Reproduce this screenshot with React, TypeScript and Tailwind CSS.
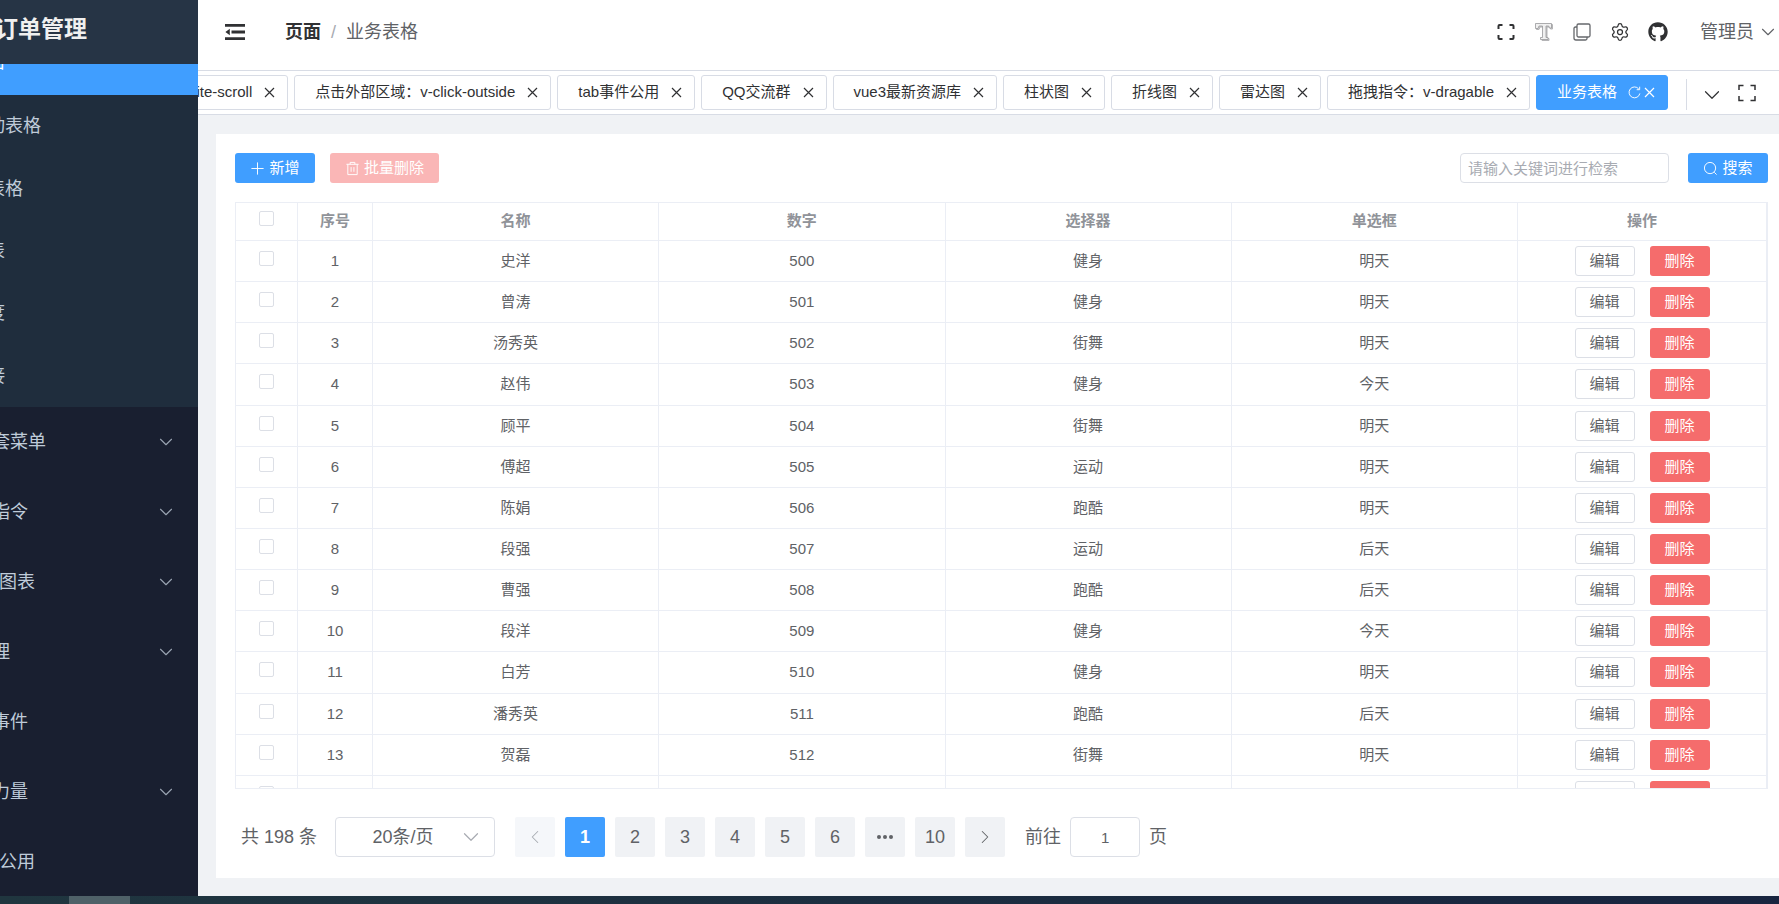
import { useState } from 'react';
import { ChevronDown, ChevronLeft, ChevronRight, Settings } from 'lucide-react';
import { FaGithub } from 'react-icons/fa';

const subMenu = ['分类联动表格', '树联动表格', '卡片列表', '列表宽度', '外部链接'];

const menu = [
  { title: '多级嵌套菜单', open: true },
  { title: '自定义指令', open: true },
  { title: 'Echarts图表', open: true },
  { title: '权限管理', open: true },
  { title: '自定义事件', open: false },
  { title: '社区的力量', open: true },
  { title: 'tab事件公用', open: false },
];

const tabs = [
  'v-infinite-scroll',
  '点击外部区域：v-click-outside',
  'tab事件公用',
  'QQ交流群',
  'vue3最新资源库',
  '柱状图',
  '折线图',
  '雷达图',
  '拖拽指令：v-dragable',
];

const columns = ['序号', '名称', '数字', '选择器', '单选框', '操作'];

const rows = [
  ['史洋', '健身', '明天'],
  ['曾涛', '健身', '明天'],
  ['汤秀英', '街舞', '明天'],
  ['赵伟', '健身', '今天'],
  ['顾平', '街舞', '明天'],
  ['傅超', '运动', '明天'],
  ['陈娟', '跑酷', '明天'],
  ['段强', '运动', '后天'],
  ['曹强', '跑酷', '后天'],
  ['段洋', '健身', '今天'],
  ['白芳', '健身', '明天'],
  ['潘秀英', '跑酷', '后天'],
  ['贺磊', '街舞', '明天'],
  ['白洋', '健身', '明天'],
].map(([name, choose, radio], i) => ({ id: i + 1, name, number: 500 + i, choose, radio }));

const pages = ['1', '2', '3', '4', '5', '6', 'more', '10'];

function FoldIcon() {
  return (
    <svg viewBox="0 0 20 16" className="h-4 w-5" fill="#303133">
      <path d="M0 0h20v2.8H0zM6.500 6.600h13.500v2.800H6.500zM0 13.200h20V16H0zM4.800 4.800v6.400L0.400 8z" />
    </svg>
  );
}

function FullscreenIcon({ thin = false }: { thin?: boolean }) {
  return (
    <svg viewBox="0 0 20 20" className="h-5 w-5" fill="none" stroke="#303133" strokeWidth={thin ? 1.5 : 2}>
      {thin ? (
        <path d="M2 7V2.500h4.500M13.500 2.500H18V7M18 13v4.500h-4.500M6.500 17.500H2V13" />
      ) : (
        <path d="M2.500 7V4q0-1 1-1h3M13.500 3h3q1 0 1 1v3M17.500 13v3q0 1-1 1h-3M6.500 17h-3q-1 0-1-1v-3" />
      )}
    </svg>
  );
}

function FontIcon() {
  return (
    <svg viewBox="0 0 20 20" className="h-5 w-5" strokeLinejoin="round">
      <path
        d="M2.500 2.500h16v4.500h-2l-.8-2H13v11.500h2v2H8v-2h1.500V5H6l-1 2.500H2.500z"
        fill="#d0d0d2"
        stroke="#b4b4b6"
        strokeWidth="1"
      />
      <path
        d="M1.500 1.500h16V6h-2L14.700 4H12v11.500h2v2H6.500v-2h2V4H5L4 6.500H1.500z"
        fill="#f0f0f0"
        stroke="#98989b"
        strokeWidth="0.800"
      />
    </svg>
  );
}

function CopyIcon() {
  return (
    <svg viewBox="0 0 20 20" className="h-5 w-5" fill="none" stroke="#66686c" strokeWidth="1.300">
      <rect x="5" y="2" width="13" height="13" rx="1.500" />
      <path d="M5 5H3.500Q2 5 2 6.500v9.500q0 2 2 2h9.500q1.500 0 1.500-1.500V15" />
    </svg>
  );
}

function CloseIcon() {
  return (
    <svg viewBox="0 0 15 15" className="h-[15px] w-[15px]" stroke="currentColor" strokeWidth="1.200">
      <path d="M3 3l9 9M12 3l-9 9" />
    </svg>
  );
}

function RefreshIcon() {
  return (
    <svg viewBox="0 0 16 16" className="h-[15px] w-[15px]" fill="none" stroke="currentColor" strokeWidth="1">
      <path d="M13.700 9A5.800 5.800 0 1 1 12.500 4.200M13.500 1.800v3.200h-3.200" />
    </svg>
  );
}

function PlusIcon() {
  return (
    <svg viewBox="0 0 16 16" className="h-[15px] w-[15px]" stroke="currentColor" strokeWidth="1">
      <path d="M8 1.500v13M1.500 8h13" />
    </svg>
  );
}

function TrashIcon() {
  return (
    <svg viewBox="0 0 16 16" className="h-[15px] w-[15px]" fill="none" stroke="currentColor" strokeWidth="1">
      <path d="M1.500 3.500h13M5.500 3.500v-2h5v2M3 3.500v11h10v-11M6.500 6.500v5M9.500 6.500v5" />
    </svg>
  );
}

function SearchIcon() {
  return (
    <svg viewBox="0 0 16 16" className="h-[15px] w-[15px]" fill="none" stroke="currentColor" strokeWidth="1">
      <circle cx="7.500" cy="7.500" r="6" />
      <path d="M12 12l2.500 2.500" />
    </svg>
  );
}

function Check({ label }: { label: string }) {
  return (
    <input
      type="checkbox"
      aria-label={label}
      className="mx-auto mb-[5px] block h-[15px] w-[15px] appearance-none rounded-[2px] border border-[#dcdfe6] bg-white checked:bg-[#409eff]"
    />
  );
}

function Sidebar() {
  return (
    <aside className="flex w-[198px] shrink-0 flex-col overflow-hidden bg-[#191f30] text-lg text-[#bfcbd9]">
      <div className="flex h-16 shrink-0 items-center bg-[#263445] pb-1">
        <h1 className="-ml-[5px] text-[23px] font-bold whitespace-nowrap text-[#f0f0f0]">订单管理</h1>
      </div>
      <nav className="flex min-h-0 flex-1 flex-col whitespace-nowrap">
        <div className="flex h-[31px] shrink-0 items-end overflow-hidden bg-[#409eff]">
          <a href="#" className="-ml-[67px] flex h-[66px] shrink-0 items-center text-white">
            业务表格
          </a>
        </div>
        <div className="flex h-[312px] shrink-0 flex-col bg-[#1f2d3d]">
          {subMenu.map((s) => (
            <a key={s} href="#" className="-ml-[67px] flex flex-1 items-center">
              {s}
            </a>
          ))}
        </div>
        {menu.map((m) => (
          <a key={m.title} href="#" className="-ml-[62px] flex h-[70px] shrink-0 items-center justify-between pr-[21px]">
            <span>{m.title}</span>
            {m.open && <ChevronDown size={22} strokeWidth={1.2} className="text-[#9aa4b2]" />}
          </a>
        ))}
      </nav>
    </aside>
  );
}

function Header() {
  return (
    <header className="shrink-0 border-b border-[#d8dce5] bg-white pb-[6px]">
      <div className="flex h-16 items-center justify-between pl-[27px]">
        <div className="flex items-center">
          <button aria-label="折叠菜单">
            <FoldIcon />
          </button>
          <nav className="ml-10 flex items-center text-lg">
            <a href="#" className="font-bold text-[#303133]">
              页面
            </a>
            <span className="mx-[10px] text-[#a8abb2]">/</span>
            <span className="text-[#606266]">业务表格</span>
          </nav>
        </div>
        <div className="flex items-center">
          <div className="flex items-center gap-[18px] text-[#303133]">
            <button aria-label="全屏">
              <FullscreenIcon />
            </button>
            <button aria-label="字体大小">
              <FontIcon />
            </button>
            <button aria-label="复制">
              <CopyIcon />
            </button>
            <button aria-label="设置">
              <Settings size={20} strokeWidth={1.5} />
            </button>
            <a href="#" aria-label="Github">
              <FaGithub size={20} />
            </a>
          </div>
          <button className="ml-8 flex items-center gap-[3px] text-lg text-[#606266]">
            管理员
            <ChevronDown size={22} strokeWidth={1.2} />
          </button>
        </div>
      </div>
    </header>
  );
}

function TabBar() {
  return (
    <div className="flex h-11 shrink-0 items-center border-b border-[#d8dce5] bg-white">
      <div className="flex min-w-0 flex-1 justify-end gap-[6px] overflow-hidden pr-[18px] text-[15px] text-[#303133]">
        {tabs.map((t) => (
          <div
            key={t}
            className="flex h-[35px] shrink-0 items-center rounded-[3px] border border-[#d8dce5] pr-[10px] pl-5 whitespace-nowrap"
          >
            <a href="#">{t}</a>
            <button aria-label={`关闭 ${t}`} className="ml-[10px]">
              <CloseIcon />
            </button>
          </div>
        ))}
        <div className="flex h-[35px] shrink-0 items-center rounded-[3px] border border-[#409eff] bg-[#409eff] pr-[10px] pl-5 whitespace-nowrap text-white">
          <a href="#">业务表格</a>
          <button aria-label="刷新" className="ml-[10px]">
            <RefreshIcon />
          </button>
          <button aria-label="关闭 业务表格">
            <CloseIcon />
          </button>
        </div>
      </div>
      <div className="mt-1 flex h-[31px] shrink-0 items-center gap-3 border-l border-[#d8dce5] pr-[22px] pl-3 text-[#303133]">
        <button aria-label="更多标签">
          <ChevronDown size={26} strokeWidth={1.1} />
        </button>
        <button aria-label="内容全屏" className="mb-1">
          <FullscreenIcon thin />
        </button>
      </div>
    </div>
  );
}

function Toolbar() {
  return (
    <div className="flex shrink-0 justify-between text-[15px]">
      <div className="flex gap-[15px]">
        <button className="flex h-[30px] w-20 items-center justify-center gap-1 rounded-[3px] bg-[#409eff] text-white">
          <PlusIcon />
          新增
        </button>
        <button disabled className="flex h-[30px] w-[109px] items-center justify-center gap-1 rounded-[3px] bg-[#fab6b6] text-white">
          <TrashIcon />
          批量删除
        </button>
      </div>
      <div className="flex gap-[19px]">
        <input
          type="text"
          aria-label="关键词"
          placeholder="请输入关键词进行检索"
          className="h-[30px] w-[209px] rounded border border-[#dcdfe6] px-[7px] text-[#606266] placeholder:text-[#a8abb2] focus:outline-none"
        />
        <button className="flex h-[30px] w-20 items-center justify-center gap-1 rounded-[3px] bg-[#409eff] text-white">
          <SearchIcon />
          搜索
        </button>
      </div>
    </div>
  );
}

function DataTable() {
  const head = 'border-r border-b border-[#ebeef5] p-0 pb-[2px] text-center';
  const cell = 'border-r border-b border-[#ebeef5] p-0 text-center';

  return (
    <div className="mt-[19px] min-h-0 flex-1 overflow-hidden border border-[#ebeef5]">
      <table className="h-[614px] w-full table-fixed border-separate border-spacing-0 text-[15px] leading-5 text-[#606266]">
        <colgroup>
          <col className="w-[62px]" />
          <col className="w-[75px]" />
          <col />
          <col />
          <col />
          <col />
          <col className="w-[249px]" />
        </colgroup>
        <thead>
          <tr className="h-[38px] text-[#909399]">
            <th className={head}>
              <Check label="全选" />
            </th>
            {columns.map((c) => (
              <th key={c} className={head}>
                {c}
              </th>
            ))}
          </tr>
        </thead>
        <tbody>
          {rows.map((r) => (
            <tr key={r.id}>
              <td className={cell}>
                <Check label={`选择 ${r.name}`} />
              </td>
              <td className={cell}>{r.id}</td>
              <td className={cell}>{r.name}</td>
              <td className={cell}>{r.number}</td>
              <td className={cell}>{r.choose}</td>
              <td className={cell}>{r.radio}</td>
              <td className={cell}>
                <div className="flex justify-center gap-[15px]">
                  <button className="h-[30px] w-[60px] rounded-[3px] border border-[#dcdfe6] bg-white">编辑</button>
                  <button className="h-[30px] w-[60px] rounded-[3px] bg-[#f56c6c] text-white">删除</button>
                </div>
              </td>
            </tr>
          ))}
        </tbody>
      </table>
    </div>
  );
}

function Pagination() {
  const [page, setPage] = useState('1');

  return (
    <div className="mt-7 flex shrink-0 items-center pl-[6px] text-lg text-[#606266]">
      <span>共 198 条</span>
      <div className="relative ml-[18px]">
        <select
          aria-label="每页条数"
          className="h-10 w-40 appearance-none rounded border border-[#dcdfe6] bg-white pr-6 text-center focus:outline-none"
        >
          <option>20条/页</option>
        </select>
        <ChevronDown
          size={26}
          strokeWidth={1.1}
          className="pointer-events-none absolute top-[7px] right-[11px] text-[#a8abb2]"
        />
      </div>
      <div className="ml-5 flex gap-[10px]">
        <button disabled aria-label="上一页" className="flex h-10 w-10 items-center justify-center rounded-[2px] bg-[#f5f7fa] text-[#a8abb2]">
          <ChevronLeft size={22} strokeWidth={1.1} />
        </button>
        {pages.map((p) => (
          <button
            key={p}
            aria-label={p === 'more' ? '向后 5 页' : undefined}
            onClick={() => p !== 'more' && setPage(p)}
            className={`flex h-10 w-10 items-center justify-center rounded-[2px] ${
              p === page ? 'bg-[#409eff] font-bold text-white' : 'bg-[#f0f2f5]'
            }`}
          >
            {p === 'more' ? (
              <svg viewBox="0 0 16 4" className="h-1 w-4" fill="currentColor">
                <circle cx="2" cy="2" r="2" />
                <circle cx="8" cy="2" r="2" />
                <circle cx="14" cy="2" r="2" />
              </svg>
            ) : (
              p
            )}
          </button>
        ))}
        <button aria-label="下一页" className="flex h-10 w-10 items-center justify-center rounded-[2px] bg-[#f0f2f5]">
          <ChevronRight size={22} strokeWidth={1.1} />
        </button>
      </div>
      <label className="ml-5 flex items-center gap-[9px]">
        前往
        <input
          type="text"
          defaultValue="1"
          className="h-10 w-[70px] rounded border border-[#dcdfe6] text-center text-[15px] focus:outline-none"
        />
        页
      </label>
    </div>
  );
}

export default function App() {
  return (
    <div className="flex h-screen flex-col overflow-hidden font-['Liberation_Sans','Noto_Sans_CJK_SC',sans-serif]">
      <div className="flex min-h-0 flex-1">
        <Sidebar />
        <div className="flex min-w-0 flex-1 flex-col bg-[#f0f2f5]">
          <Header />
          <TabBar />
          <main className="flex min-h-0 flex-1 flex-col pt-[19px] pb-[18px] pl-[18px]">
            <section className="flex min-h-0 flex-1 flex-col bg-white pt-[19px] pr-[11px] pb-[21px] pl-[19px]">
              <Toolbar />
              <DataTable />
              <Pagination />
            </section>
          </main>
        </div>
      </div>
      <footer className="h-2 shrink-0 bg-linear-to-r from-[#20363f] to-[#182540] pl-[69px]">
        <div className="h-2 w-[61px] bg-[#4f6168]" />
      </footer>
    </div>
  );
}
